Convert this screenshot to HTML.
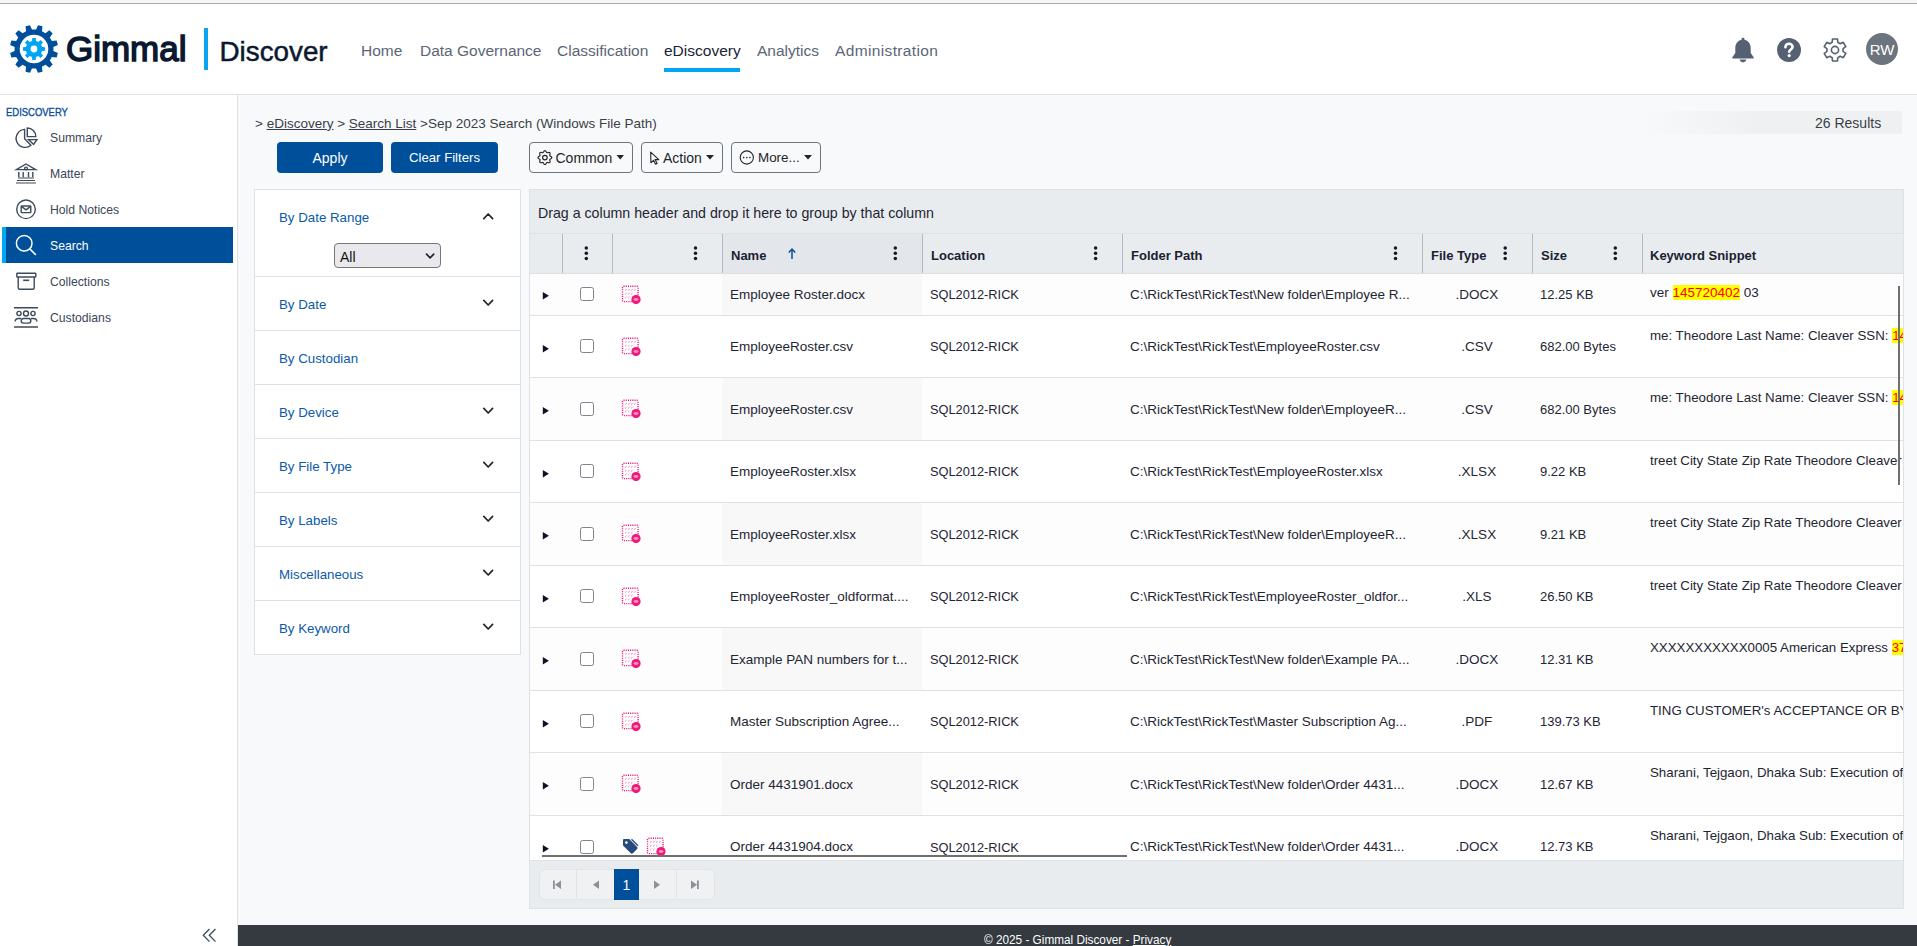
<!DOCTYPE html>
<html><head><meta charset="utf-8">
<style>
*{box-sizing:border-box;margin:0;padding:0}
html,body{width:1917px;height:946px;overflow:hidden;background:#f8f9fa;font-family:"Liberation Sans",sans-serif;color:#212529}
.a{position:absolute}
.t{position:absolute;white-space:nowrap;line-height:1}
#topstrip{left:0;top:0;width:1917px;height:3px;background:linear-gradient(#f5f5f7 0,#f5f5f7 2px,#f8f8fa 2px)}
#topline{left:0;top:3px;width:1917px;height:1px;background:#a8a8a8}
#header{left:0;top:4px;width:1917px;height:90px;background:#fff}
#hborder{left:0;top:94px;width:1917px;height:1px;background:#dee2e6}
#sidebar{left:0;top:95px;width:237px;height:851px;background:#fff}
#sborder{left:237px;top:95px;width:1px;height:851px;background:#dee2e6}
.nav{font-size:15.5px;color:#5b6676}
.side{font-size:12.2px;color:#3b4656}
.fil{font-size:13.3px;color:#0b5aa8}
.filrow{position:absolute;left:254px;width:267px;height:55px;border:1px solid #dee2e6;background:#fff}
.btnp{position:absolute;top:142px;height:31px;background:#004f9b;border-radius:4px;color:#fff;font-size:14px}
.btno{position:absolute;top:142px;height:31px;border:1px solid #6c757d;border-radius:4px;font-size:14px;color:#212529}
.cell{font-size:13.5px;color:#1e2533}
.hd{font-size:13px;font-weight:bold;color:#1a2232}
.hl{background:#ffff00;color:#ff0000}
</style></head><body>
<div id="topstrip" class="a"></div>
<div id="topline" class="a"></div>
<div id="header" class="a"></div>
<div id="hborder" class="a"></div>
<div id="sidebar" class="a"></div>
<div id="sborder" class="a"></div>

<!-- logo -->
<svg class="a" style="left:9px;top:24px" width="50" height="50" viewBox="0 0 50 50" id="logo"><path fill="#004f9d" fill-rule="evenodd" d="M44.39 27.04 L48.87 28.99 L47.67 33.48 L42.81 32.93 L40.78 36.46 L43.67 40.39 L40.39 43.67 L36.46 40.78 L32.93 42.81 L33.48 47.67 L28.99 48.87 L27.04 44.39 L22.96 44.39 L21.01 48.87 L16.52 47.67 L17.07 42.81 L13.54 40.78 L9.61 43.67 L6.33 40.39 L9.22 36.46 L7.19 32.93 L2.33 33.48 L1.13 28.99 L5.61 27.04 L5.61 22.96 L1.13 21.01 L2.33 16.52 L7.19 17.07 L9.22 13.54 L6.33 9.61 L9.61 6.33 L13.54 9.22 L17.07 7.19 L16.52 2.33 L21.01 1.13 L22.96 5.61 L27.04 5.61 L28.99 1.13 L33.48 2.33 L32.93 7.19 L36.46 9.22 L40.39 6.33 L43.67 9.61 L40.78 13.54 L42.81 17.07 L47.67 16.52 L48.87 21.01 L44.39 22.96Z M10.70 25.00a14.30 14.30 0 1 0 28.60 0a14.30 14.30 0 1 0 -28.60 0Z"/><path fill="#00a6f5" fill-rule="evenodd" d="M33.05 22.99 L36.06 23.25 L36.06 26.75 L33.05 27.01 L32.11 29.27 L34.06 31.58 L31.58 34.06 L29.27 32.11 L27.01 33.05 L26.75 36.06 L23.25 36.06 L22.99 33.05 L20.73 32.11 L18.42 34.06 L15.94 31.58 L17.89 29.27 L16.95 27.01 L13.94 26.75 L13.94 23.25 L16.95 22.99 L17.89 20.73 L15.94 18.42 L18.42 15.94 L20.73 17.89 L22.99 16.95 L23.25 13.94 L26.75 13.94 L27.01 16.95 L29.27 17.89 L31.58 15.94 L34.06 18.42 L32.11 20.73Z M21.60 25.00a3.40 3.40 0 1 0 6.80 0a3.40 3.40 0 1 0 -6.80 0Z"/></svg>
<div class="t" style="left:65.5px;top:31.5px;font-size:35.5px;color:#0a1930;-webkit-text-stroke:1.5px #0a1930;letter-spacing:0px;transform:scaleX(0.985);transform-origin:left top">Gimmal</div>
<div class="a" style="left:204px;top:28px;width:4px;height:42px;background:#0aa5f0"></div>
<div class="t" style="left:219.5px;top:37.6px;font-size:27.8px;color:#0a1930;-webkit-text-stroke:0.5px #0a1930">Discover</div>

<!-- nav -->
<div class="t nav" style="left:361px;top:42.8px">Home</div>
<div class="t nav" style="left:420px;top:42.8px">Data Governance</div>
<div class="t nav" style="left:557px;top:42.8px">Classification</div>
<div class="t nav" style="left:664px;top:42.8px;color:#1a2538">eDiscovery</div>
<div class="a" style="left:664px;top:68px;width:76px;height:4px;background:#00a5f1"></div>
<div class="t nav" style="left:757px;top:42.8px">Analytics</div>
<div class="t nav" style="left:835px;top:42.8px;letter-spacing:0.36px">Administration</div>


<!-- header right icons -->
<svg class="a" style="left:1731px;top:37px" width="24" height="26" viewBox="0 0 24 26">
 <path fill="#556173" d="M12 0.8c-0.9 0-1.5 0.6-1.5 1.4v0.5C6.6 3.5 4.3 6.9 4.3 10.8v5.2L1.4 20.3c-0.4 0.6 0 1.3 0.7 1.3h19.8c0.7 0 1.1-0.7 0.7-1.3L19.7 16v-5.2c0-3.9-2.3-7.3-6.2-8.1V2.2c0-0.8-0.6-1.4-1.5-1.4z"/>
 <path fill="#556173" d="M8.6 22.6h6.8c-0.3 1.6-1.7 2.8-3.4 2.8s-3.1-1.2-3.4-2.8z"/>
</svg>
<svg class="a" style="left:1777px;top:38px" width="24" height="24" viewBox="0 0 24 24">
 <circle cx="12" cy="12" r="12" fill="#556173"/>
 <path fill="none" stroke="#fff" stroke-width="2.6" stroke-linecap="round" d="M8.4 9.2c0-2.1 1.6-3.4 3.6-3.4s3.6 1.3 3.6 3.2c0 2.4-3.4 2.5-3.4 4.8"/>
 <circle cx="12.2" cy="17.6" r="1.6" fill="#fff"/>
</svg>
<svg class="a" style="left:1822px;top:37px" width="26" height="26" viewBox="0 0 26 26" id="hgear"><path fill="none" stroke="#556173" stroke-width="1.6" stroke-linejoin="round" d="M10.20 5.29 L10.46 1.99 L15.54 1.99 L15.80 5.29 L18.27 6.72 L21.26 5.29 L23.81 9.70 L21.08 11.58 L21.08 14.42 L23.81 16.30 L21.26 20.71 L18.27 19.28 L15.80 20.71 L15.54 24.01 L10.46 24.01 L10.20 20.71 L7.73 19.28 L4.74 20.71 L2.19 16.30 L4.92 14.42 L4.92 11.58 L2.19 9.70 L4.74 5.29 L7.73 6.72Z"/><circle cx="13" cy="13" r="3.6" fill="none" stroke="#556173" stroke-width="1.6"/></svg>
<div class="a" style="left:1866px;top:33px;width:32px;height:32px;border-radius:50%;background:#6c757d"></div>
<div class="t" style="left:1866px;top:42px;width:32px;text-align:center;font-size:15px;color:#fff">RW</div>

<!-- sidebar -->
<div class="t" style="left:6px;top:107px;font-size:11px;color:#0a4f9c;-webkit-text-stroke:0.35px #0a4f9c;transform:scaleX(0.86);transform-origin:left top">EDISCOVERY</div>
<div class="a" style="left:2px;top:227px;width:231px;height:36px;background:#004f9b"></div>
<div class="a" style="left:2px;top:227px;width:4px;height:36px;background:#00a9f4"></div>
<div class="t side" style="left:50px;top:132px">Summary</div>
<div class="t side" style="left:50px;top:168px">Matter</div>
<div class="t side" style="left:50px;top:204px">Hold Notices</div>
<div class="t side" style="left:50px;top:240px;color:#fff">Search</div>
<div class="t side" style="left:50px;top:276px">Collections</div>
<div class="t side" style="left:50px;top:312px">Custodians</div>
<svg class="a" style="left:0;top:95px" width="237" height="851" viewBox="0 95 237 851" fill="none" stroke="#3e4a5b" stroke-width="1.4">
 <!-- summary pie -->
 <path d="M24.6 129.4v9.3l6.3 6.6a9 9 0 1 1-6.3-15.9z"/>
 <path d="M27.3 128v8.6h8.5a8.5 8.5 0 0 0-8.5-8.6z"/>
 <path d="M28.6 139.6h8.3l-3.3 4.8z"/>
 <!-- matter -->
 <path d="M16.4 169.6l9.6-5.6 9.6 5.6z"/>
 <circle cx="26" cy="168.5" r="1.4"/>
 <path d="M18.8 172v5.3M23.2 172v5.3M28.5 172v5.3M32.8 172v5.3"/>
 <path d="M18 178h16M17 180.5h18M16 183h20" stroke-width="1.2"/>
 <!-- hold notices -->
 <circle cx="26" cy="209.3" r="9.3"/>
 <rect x="21.2" y="206" width="9.6" height="6.6" rx="0.6"/>
 <path d="M21.4 206.4l4.6 3.4 4.6-3.4"/>
 <!-- search -->
 <circle cx="24.2" cy="243.3" r="7.8" stroke="#fff" stroke-width="1.5"/>
 <path d="M29.8 248.9l6 6" stroke="#fff" stroke-width="1.5"/>
 <!-- collections -->
 <rect x="16.8" y="273.2" width="19" height="3.8" rx="0.6"/>
 <path d="M18.2 277v10.8c0 0.9 0.6 1.5 1.5 1.5h13c0.9 0 1.5-0.6 1.5-1.5V277"/>
 <path d="M23.2 280.3h6" stroke-width="1.6"/>
 <!-- custodians -->
 <path d="M14 307.8h24M14 327h24" stroke-width="1.6"/>
 <circle cx="19" cy="313.5" r="2.1"/><circle cx="26" cy="313.5" r="2.5"/><circle cx="33" cy="313.5" r="2.1"/>
 <path d="M15.2 321.5c0-2 1.2-3 3.6-3h2.2M36.8 321.5c0-2-1.2-3-3.6-3h-2.2"/>
 <rect x="21.2" y="318.5" width="9.6" height="4.6" rx="2.3"/>
 <!-- collapse -->
 <path d="M209.5 929l-6.2 6.3 6.2 6.3M215.5 929l-6.2 6.3 6.2 6.3" stroke-width="1.3"/>
</svg>

<!-- breadcrumb -->
<div class="t" style="left:255px;top:116.5px;font-size:13.5px;color:#3a3f47">&gt; <u>eDiscovery</u> &gt; <u>Search List</u> &gt;Sep 2023 Search (Windows File Path)</div>
<div class="a" style="left:1641px;top:111px;width:261px;height:23px;background:linear-gradient(to right,rgba(239,240,242,0),#eff0f2 45%)"></div>
<div class="t" style="left:1815px;top:116px;font-size:14px;color:#3a3f47">26 Results</div>

<!-- buttons -->
<div class="btnp" style="left:277px;width:106px"></div>
<div class="t" style="left:277px;width:106px;text-align:center;top:151.3px;font-size:14px;color:#fff">Apply</div>
<div class="btnp" style="left:391px;width:107px"></div>
<div class="t" style="left:391px;width:107px;text-align:center;top:151.3px;font-size:13.2px;color:#fff">Clear Filters</div>

<div class="btno" style="left:529px;width:104px"></div>
<div class="btno" style="left:641px;width:82px"></div>
<div class="btno" style="left:731px;width:90px"></div>
<div class="t" style="left:555.5px;top:150.5px;font-size:14px">Common</div>
<div class="t" style="left:663px;top:150.5px;font-size:14px">Action</div>
<div class="t" style="left:758px;top:150.5px;font-size:13.4px">More...</div>
<svg class="a" style="left:0;top:0" width="900" height="200" viewBox="0 0 900 200">
 <path d="M616.5 155h7.5l-3.75 4.5z M706 155h8l-4 4.5z M804 155h8l-4 4.5z" fill="#212529"/>
 <path fill="none" stroke="#212529" stroke-width="1.15" stroke-linejoin="round" d="M551.80 157.60 L551.76 157.87 L551.65 158.13 L551.48 158.38 L551.23 158.60 L550.88 158.79 L550.53 158.95 L550.27 159.11 L550.06 159.28 L549.90 159.45 L549.80 159.63 L549.74 159.83 L549.73 160.06 L549.77 160.33 L549.83 160.62 L549.97 160.99 L550.09 161.37 L550.10 161.70 L550.05 162.00 L549.94 162.26 L549.78 162.48 L549.56 162.64 L549.30 162.75 L549.00 162.80 L548.67 162.79 L548.29 162.67 L547.92 162.53 L547.63 162.47 L547.36 162.43 L547.13 162.44 L546.93 162.50 L546.75 162.60 L546.58 162.76 L546.41 162.97 L546.25 163.23 L546.09 163.58 L545.90 163.93 L545.68 164.18 L545.43 164.35 L545.17 164.46 L544.90 164.50 L544.63 164.46 L544.37 164.35 L544.12 164.18 L543.90 163.93 L543.71 163.58 L543.55 163.23 L543.39 162.97 L543.22 162.76 L543.05 162.60 L542.87 162.50 L542.67 162.44 L542.44 162.43 L542.17 162.47 L541.88 162.53 L541.51 162.67 L541.13 162.79 L540.80 162.80 L540.50 162.75 L540.24 162.64 L540.02 162.48 L539.86 162.26 L539.75 162.00 L539.70 161.70 L539.71 161.37 L539.83 160.99 L539.97 160.62 L540.03 160.33 L540.07 160.06 L540.06 159.83 L540.00 159.63 L539.90 159.45 L539.74 159.28 L539.53 159.11 L539.27 158.95 L538.92 158.79 L538.57 158.60 L538.32 158.38 L538.15 158.13 L538.04 157.87 L538.00 157.60 L538.04 157.33 L538.15 157.07 L538.32 156.82 L538.57 156.60 L538.92 156.41 L539.27 156.25 L539.53 156.09 L539.74 155.92 L539.90 155.75 L540.00 155.57 L540.06 155.37 L540.07 155.14 L540.03 154.87 L539.97 154.58 L539.83 154.21 L539.71 153.83 L539.70 153.50 L539.75 153.20 L539.86 152.94 L540.02 152.72 L540.24 152.56 L540.50 152.45 L540.80 152.40 L541.13 152.41 L541.51 152.53 L541.88 152.67 L542.17 152.73 L542.44 152.77 L542.67 152.76 L542.87 152.70 L543.05 152.60 L543.22 152.44 L543.39 152.23 L543.55 151.97 L543.71 151.62 L543.90 151.27 L544.12 151.02 L544.37 150.85 L544.63 150.74 L544.90 150.70 L545.17 150.74 L545.43 150.85 L545.68 151.02 L545.90 151.27 L546.09 151.62 L546.25 151.97 L546.41 152.23 L546.58 152.44 L546.75 152.60 L546.93 152.70 L547.13 152.76 L547.36 152.77 L547.63 152.73 L547.92 152.67 L548.29 152.53 L548.67 152.41 L549.00 152.40 L549.30 152.45 L549.56 152.56 L549.78 152.72 L549.94 152.94 L550.05 153.20 L550.10 153.50 L550.09 153.83 L549.97 154.21 L549.83 154.58 L549.77 154.87 L549.73 155.14 L549.74 155.37 L549.80 155.57 L549.90 155.75 L550.06 155.92 L550.27 156.09 L550.53 156.25 L550.88 156.41 L551.23 156.60 L551.48 156.82 L551.65 157.07 L551.76 157.33Z"/><circle cx="544.9" cy="157.6" r="2.3" fill="none" stroke="#212529" stroke-width="1.15"/>
 <path d="M650.7 152.2l0.2 10.6 2.6-2.5 2.1 4 1.5-0.8-2-3.9h3.7z" fill="none" stroke="#212529" stroke-width="1.1" stroke-linejoin="round"/>
 <circle cx="746.8" cy="157.5" r="6.6" fill="none" stroke="#212529" stroke-width="1.1"/>
 <circle cx="743.7" cy="157.6" r="0.8" fill="#212529"/><circle cx="746.8" cy="157.6" r="0.8" fill="#212529"/><circle cx="749.9" cy="157.6" r="0.8" fill="#212529"/>
</svg>
<!-- filter panel -->
<div class="a" style="left:254px;top:189px;width:267px;height:466px;background:#fff;border:1px solid #dee2e6"></div>
<div class="a" style="left:255px;top:276px;width:265px;height:1px;background:#dee2e6"></div>
<div class="a" style="left:255px;top:330px;width:265px;height:1px;background:#dee2e6"></div>
<div class="a" style="left:255px;top:384px;width:265px;height:1px;background:#dee2e6"></div>
<div class="a" style="left:255px;top:438px;width:265px;height:1px;background:#dee2e6"></div>
<div class="a" style="left:255px;top:492px;width:265px;height:1px;background:#dee2e6"></div>
<div class="a" style="left:255px;top:546px;width:265px;height:1px;background:#dee2e6"></div>
<div class="a" style="left:255px;top:600px;width:265px;height:1px;background:#dee2e6"></div>
<div class="t fil" style="left:279px;top:211px">By Date Range</div>
<div class="t fil" style="left:279px;top:298px">By Date</div>
<div class="t fil" style="left:279px;top:352px">By Custodian</div>
<div class="t fil" style="left:279px;top:406px">By Device</div>
<div class="t fil" style="left:279px;top:460px">By File Type</div>
<div class="t fil" style="left:279px;top:514px">By Labels</div>
<div class="t fil" style="left:279px;top:568px">Miscellaneous</div>
<div class="t fil" style="left:279px;top:622px">By Keyword</div>
<div class="a" style="left:334px;top:243px;width:107px;height:25px;background:#e9e9ed;border:1px solid #767676;border-radius:4px"></div>
<div class="t" style="left:340px;top:249.5px;font-size:14px;color:#111">All</div>
<svg class="a" style="left:0;top:0" width="530" height="660" viewBox="0 0 530 660" fill="none" stroke="#212529" stroke-width="1.7" stroke-linecap="round" stroke-linejoin="round">
 <path d="M426.5 254.2l3.6 3.6 3.6-3.6"/>
 <path d="M483.8 218.6l4.4-4.6 4.4 4.6"/>
 <path d="M483.8 300.4l4.4 4.6 4.4-4.6"/>
 <path d="M483.8 408.4l4.4 4.6 4.4-4.6"/>
 <path d="M483.8 462.4l4.4 4.6 4.4-4.6"/>
 <path d="M483.8 516.4l4.4 4.6 4.4-4.6"/>
 <path d="M483.8 570.4l4.4 4.6 4.4-4.6"/>
 <path d="M483.8 624.4l4.4 4.6 4.4-4.6"/>
</svg>

<!-- grid frame -->
<div class="a" style="left:529px;top:189px;width:1375px;height:720px;background:#e9ecef;border:1px solid #dee2e6"></div>
<div class="t" style="left:538px;top:206px;font-size:14.2px;color:#1e2533">Drag a column header and drop it here to group by that column</div>
<div class="a" style="left:530px;top:233px;width:1373px;height:1px;background:#dde1e5"></div>
<div class="a" style="left:722px;top:234px;width:200px;height:39px;background:#e3e6ea"></div>
<div class="a" style="left:530px;top:273px;width:1373px;height:1px;background:#dee2e6"></div>
<div class="a" style="left:562px;top:234px;width:1px;height:39px;background:#b3b9c0"></div>
<div class="a" style="left:612px;top:234px;width:1px;height:39px;background:#b3b9c0"></div>
<div class="a" style="left:722px;top:234px;width:1px;height:39px;background:#b3b9c0"></div>
<div class="a" style="left:922px;top:234px;width:1px;height:39px;background:#b3b9c0"></div>
<div class="a" style="left:1122px;top:234px;width:1px;height:39px;background:#b3b9c0"></div>
<div class="a" style="left:1422px;top:234px;width:1px;height:39px;background:#b3b9c0"></div>
<div class="a" style="left:1532px;top:234px;width:1px;height:39px;background:#b3b9c0"></div>
<div class="a" style="left:1642px;top:234px;width:1px;height:39px;background:#b3b9c0"></div>
<div class="t hd" style="left:731px;top:248.5px">Name</div>
<div class="t hd" style="left:931px;top:248.5px">Location</div>
<div class="t hd" style="left:1131px;top:248.5px">Folder Path</div>
<div class="t hd" style="left:1431px;top:248.5px">File Type</div>
<div class="t hd" style="left:1541px;top:248.5px">Size</div>
<div class="t hd" style="left:1650px;top:248.5px">Keyword Snippet</div>
<svg class="a" style="left:0;top:0" width="1917" height="300" viewBox="0 0 1917 300" fill="#111827">
 <circle cx="586.3" cy="248.0" r="1.75"/><circle cx="586.3" cy="253.3" r="1.75"/><circle cx="586.3" cy="258.6" r="1.75"/><circle cx="695.5" cy="248.0" r="1.75"/><circle cx="695.5" cy="253.3" r="1.75"/><circle cx="695.5" cy="258.6" r="1.75"/><circle cx="895.3" cy="248.0" r="1.75"/><circle cx="895.3" cy="253.3" r="1.75"/><circle cx="895.3" cy="258.6" r="1.75"/><circle cx="1095.6" cy="248.0" r="1.75"/><circle cx="1095.6" cy="253.3" r="1.75"/><circle cx="1095.6" cy="258.6" r="1.75"/><circle cx="1395.5" cy="248.0" r="1.75"/><circle cx="1395.5" cy="253.3" r="1.75"/><circle cx="1395.5" cy="258.6" r="1.75"/><circle cx="1505.2" cy="248.0" r="1.75"/><circle cx="1505.2" cy="253.3" r="1.75"/><circle cx="1505.2" cy="258.6" r="1.75"/><circle cx="1615.3" cy="248.0" r="1.75"/><circle cx="1615.3" cy="253.3" r="1.75"/><circle cx="1615.3" cy="258.6" r="1.75"/>
 <path d="M792 259V249.5M788.8 252.5l3.2-3.5 3.2 3.5" stroke="#0b4f9f" stroke-width="1.5" fill="none"/>
</svg>
<div class="a" style="left:529px;top:273px;width:1374px;height:587px;background:#fff;overflow:hidden">
<div class="a" style="left:0;top:0px;width:1374px;height:42px;background:#fdfdfd"></div>
<div class="a" style="left:193px;top:0px;width:200px;height:42px;background:#f8f8f9"></div>
<div class="a" style="left:0;top:41.5px;width:1374px;height:1px;background:#dee2e6"></div>
<svg class="a" style="left:13.3px;top:18.4px" width="7" height="9" viewBox="0 0 7 9"><path d="M0.8 0.9L6.9 4.7L0.8 8.5z" fill="#0b1426"/></svg>
<div class="a" style="left:51px;top:14.0px;width:14px;height:14px;border:1px solid #80858d;border-radius:2.5px;background:#fff"></div>
<svg class="a" style="left:92px;top:10.5px" width="20" height="20" viewBox="0 0 20 20"><rect x="1.5" y="2.3" width="15.6" height="15.3" rx="1" fill="none" stroke="#f0187a" stroke-width="1.4" stroke-dasharray="1.1 1.1"/><path d="M4.2 6.6l1.6-1.6M7.2 6.6l1.6-1.6M10.2 6.6l1.6-1.6M13.2 6.6l1.6-1.6M4.2 10.4l1.6-1.6M7.2 10.4l1.6-1.6M10.2 10.4l1.6-1.6M4.2 14.2l1.6-1.6M7.2 14.2l1.6-1.6" stroke="#f0187a" stroke-width="0.9" stroke-dasharray="0.8 0.6" opacity="0.85"/><circle cx="15" cy="15.5" r="4.6" fill="#f0187a"/><ellipse cx="15" cy="15.5" rx="2.6" ry="1.4" fill="#f790bd"/></svg>
<div class="t cell" style="left:201px;top:14.9px">Employee Roster.docx</div>
<div class="t cell" style="left:401px;top:16.1px;font-size:12.8px">SQL2012-RICK</div>
<div class="t cell" style="left:601px;top:14.9px">C:\RickTest\RickTest\New folder\Employee R...</div>
<div class="t cell" style="left:893px;top:14.9px;width:110px;text-align:center">.DOCX</div>
<div class="t cell" style="left:1011px;top:14.9px;font-size:13px">12.25 KB</div>
<div class="t cell" style="left:1121px;top:12.5px;font-size:13.5px">ver <span class="hl">145720402</span> 03</div>
<div class="a" style="left:0;top:104.0px;width:1374px;height:1px;background:#dee2e6"></div>
<svg class="a" style="left:13.3px;top:70.65px" width="7" height="9" viewBox="0 0 7 9"><path d="M0.8 0.9L6.9 4.7L0.8 8.5z" fill="#0b1426"/></svg>
<div class="a" style="left:51px;top:66.25px;width:14px;height:14px;border:1px solid #80858d;border-radius:2.5px;background:#fff"></div>
<svg class="a" style="left:92px;top:62.75px" width="20" height="20" viewBox="0 0 20 20"><rect x="1.5" y="2.3" width="15.6" height="15.3" rx="1" fill="none" stroke="#f0187a" stroke-width="1.4" stroke-dasharray="1.1 1.1"/><path d="M4.2 6.6l1.6-1.6M7.2 6.6l1.6-1.6M10.2 6.6l1.6-1.6M13.2 6.6l1.6-1.6M4.2 10.4l1.6-1.6M7.2 10.4l1.6-1.6M10.2 10.4l1.6-1.6M4.2 14.2l1.6-1.6M7.2 14.2l1.6-1.6" stroke="#f0187a" stroke-width="0.9" stroke-dasharray="0.8 0.6" opacity="0.85"/><circle cx="15" cy="15.5" r="4.6" fill="#f0187a"/><ellipse cx="15" cy="15.5" rx="2.6" ry="1.4" fill="#f790bd"/></svg>
<div class="t cell" style="left:201px;top:67.15px">EmployeeRoster.csv</div>
<div class="t cell" style="left:401px;top:68.35px;font-size:12.8px">SQL2012-RICK</div>
<div class="t cell" style="left:601px;top:67.15px">C:\RickTest\RickTest\EmployeeRoster.csv</div>
<div class="t cell" style="left:893px;top:67.15px;width:110px;text-align:center">.CSV</div>
<div class="t cell" style="left:1011px;top:67.15px;font-size:13px">682.00 Bytes</div>
<div class="t cell" style="left:1121px;top:55.5px;font-size:13.3px">me: Theodore Last Name: Cleaver SSN: <span class="hl">14</span></div>
<div class="a" style="left:0;top:104.5px;width:1374px;height:62.5px;background:#fdfdfd"></div>
<div class="a" style="left:193px;top:104.5px;width:200px;height:62.5px;background:#f8f8f9"></div>
<div class="a" style="left:0;top:166.5px;width:1374px;height:1px;background:#dee2e6"></div>
<svg class="a" style="left:13.3px;top:133.15px" width="7" height="9" viewBox="0 0 7 9"><path d="M0.8 0.9L6.9 4.7L0.8 8.5z" fill="#0b1426"/></svg>
<div class="a" style="left:51px;top:128.75px;width:14px;height:14px;border:1px solid #80858d;border-radius:2.5px;background:#fff"></div>
<svg class="a" style="left:92px;top:125.25px" width="20" height="20" viewBox="0 0 20 20"><rect x="1.5" y="2.3" width="15.6" height="15.3" rx="1" fill="none" stroke="#f0187a" stroke-width="1.4" stroke-dasharray="1.1 1.1"/><path d="M4.2 6.6l1.6-1.6M7.2 6.6l1.6-1.6M10.2 6.6l1.6-1.6M13.2 6.6l1.6-1.6M4.2 10.4l1.6-1.6M7.2 10.4l1.6-1.6M10.2 10.4l1.6-1.6M4.2 14.2l1.6-1.6M7.2 14.2l1.6-1.6" stroke="#f0187a" stroke-width="0.9" stroke-dasharray="0.8 0.6" opacity="0.85"/><circle cx="15" cy="15.5" r="4.6" fill="#f0187a"/><ellipse cx="15" cy="15.5" rx="2.6" ry="1.4" fill="#f790bd"/></svg>
<div class="t cell" style="left:201px;top:129.65px">EmployeeRoster.csv</div>
<div class="t cell" style="left:401px;top:130.85px;font-size:12.8px">SQL2012-RICK</div>
<div class="t cell" style="left:601px;top:129.65px">C:\RickTest\RickTest\New folder\EmployeeR...</div>
<div class="t cell" style="left:893px;top:129.65px;width:110px;text-align:center">.CSV</div>
<div class="t cell" style="left:1011px;top:129.65px;font-size:13px">682.00 Bytes</div>
<div class="t cell" style="left:1121px;top:118.0px;font-size:13.3px">me: Theodore Last Name: Cleaver SSN: <span class="hl">14</span></div>
<div class="a" style="left:0;top:229.0px;width:1374px;height:1px;background:#dee2e6"></div>
<svg class="a" style="left:13.3px;top:195.65px" width="7" height="9" viewBox="0 0 7 9"><path d="M0.8 0.9L6.9 4.7L0.8 8.5z" fill="#0b1426"/></svg>
<div class="a" style="left:51px;top:191.25px;width:14px;height:14px;border:1px solid #80858d;border-radius:2.5px;background:#fff"></div>
<svg class="a" style="left:92px;top:187.75px" width="20" height="20" viewBox="0 0 20 20"><rect x="1.5" y="2.3" width="15.6" height="15.3" rx="1" fill="none" stroke="#f0187a" stroke-width="1.4" stroke-dasharray="1.1 1.1"/><path d="M4.2 6.6l1.6-1.6M7.2 6.6l1.6-1.6M10.2 6.6l1.6-1.6M13.2 6.6l1.6-1.6M4.2 10.4l1.6-1.6M7.2 10.4l1.6-1.6M10.2 10.4l1.6-1.6M4.2 14.2l1.6-1.6M7.2 14.2l1.6-1.6" stroke="#f0187a" stroke-width="0.9" stroke-dasharray="0.8 0.6" opacity="0.85"/><circle cx="15" cy="15.5" r="4.6" fill="#f0187a"/><ellipse cx="15" cy="15.5" rx="2.6" ry="1.4" fill="#f790bd"/></svg>
<div class="t cell" style="left:201px;top:192.15px">EmployeeRoster.xlsx</div>
<div class="t cell" style="left:401px;top:193.35px;font-size:12.8px">SQL2012-RICK</div>
<div class="t cell" style="left:601px;top:192.15px">C:\RickTest\RickTest\EmployeeRoster.xlsx</div>
<div class="t cell" style="left:893px;top:192.15px;width:110px;text-align:center">.XLSX</div>
<div class="t cell" style="left:1011px;top:192.15px;font-size:13px">9.22 KB</div>
<div class="t cell" style="left:1121px;top:180.5px;font-size:13.3px">treet City State Zip Rate Theodore Cleaver</div>
<div class="a" style="left:0;top:229.5px;width:1374px;height:62.5px;background:#fdfdfd"></div>
<div class="a" style="left:193px;top:229.5px;width:200px;height:62.5px;background:#f8f8f9"></div>
<div class="a" style="left:0;top:291.5px;width:1374px;height:1px;background:#dee2e6"></div>
<svg class="a" style="left:13.3px;top:258.15px" width="7" height="9" viewBox="0 0 7 9"><path d="M0.8 0.9L6.9 4.7L0.8 8.5z" fill="#0b1426"/></svg>
<div class="a" style="left:51px;top:253.75px;width:14px;height:14px;border:1px solid #80858d;border-radius:2.5px;background:#fff"></div>
<svg class="a" style="left:92px;top:250.25px" width="20" height="20" viewBox="0 0 20 20"><rect x="1.5" y="2.3" width="15.6" height="15.3" rx="1" fill="none" stroke="#f0187a" stroke-width="1.4" stroke-dasharray="1.1 1.1"/><path d="M4.2 6.6l1.6-1.6M7.2 6.6l1.6-1.6M10.2 6.6l1.6-1.6M13.2 6.6l1.6-1.6M4.2 10.4l1.6-1.6M7.2 10.4l1.6-1.6M10.2 10.4l1.6-1.6M4.2 14.2l1.6-1.6M7.2 14.2l1.6-1.6" stroke="#f0187a" stroke-width="0.9" stroke-dasharray="0.8 0.6" opacity="0.85"/><circle cx="15" cy="15.5" r="4.6" fill="#f0187a"/><ellipse cx="15" cy="15.5" rx="2.6" ry="1.4" fill="#f790bd"/></svg>
<div class="t cell" style="left:201px;top:254.65px">EmployeeRoster.xlsx</div>
<div class="t cell" style="left:401px;top:255.85px;font-size:12.8px">SQL2012-RICK</div>
<div class="t cell" style="left:601px;top:254.65px">C:\RickTest\RickTest\New folder\EmployeeR...</div>
<div class="t cell" style="left:893px;top:254.65px;width:110px;text-align:center">.XLSX</div>
<div class="t cell" style="left:1011px;top:254.65px;font-size:13px">9.21 KB</div>
<div class="t cell" style="left:1121px;top:243.0px;font-size:13.3px">treet City State Zip Rate Theodore Cleaver</div>
<div class="a" style="left:0;top:354.0px;width:1374px;height:1px;background:#dee2e6"></div>
<svg class="a" style="left:13.3px;top:320.65px" width="7" height="9" viewBox="0 0 7 9"><path d="M0.8 0.9L6.9 4.7L0.8 8.5z" fill="#0b1426"/></svg>
<div class="a" style="left:51px;top:316.25px;width:14px;height:14px;border:1px solid #80858d;border-radius:2.5px;background:#fff"></div>
<svg class="a" style="left:92px;top:312.75px" width="20" height="20" viewBox="0 0 20 20"><rect x="1.5" y="2.3" width="15.6" height="15.3" rx="1" fill="none" stroke="#f0187a" stroke-width="1.4" stroke-dasharray="1.1 1.1"/><path d="M4.2 6.6l1.6-1.6M7.2 6.6l1.6-1.6M10.2 6.6l1.6-1.6M13.2 6.6l1.6-1.6M4.2 10.4l1.6-1.6M7.2 10.4l1.6-1.6M10.2 10.4l1.6-1.6M4.2 14.2l1.6-1.6M7.2 14.2l1.6-1.6" stroke="#f0187a" stroke-width="0.9" stroke-dasharray="0.8 0.6" opacity="0.85"/><circle cx="15" cy="15.5" r="4.6" fill="#f0187a"/><ellipse cx="15" cy="15.5" rx="2.6" ry="1.4" fill="#f790bd"/></svg>
<div class="t cell" style="left:201px;top:317.15px">EmployeeRoster_oldformat....</div>
<div class="t cell" style="left:401px;top:318.35px;font-size:12.8px">SQL2012-RICK</div>
<div class="t cell" style="left:601px;top:317.15px">C:\RickTest\RickTest\EmployeeRoster_oldfor...</div>
<div class="t cell" style="left:893px;top:317.15px;width:110px;text-align:center">.XLS</div>
<div class="t cell" style="left:1011px;top:317.15px;font-size:13px">26.50 KB</div>
<div class="t cell" style="left:1121px;top:305.5px;font-size:13.3px">treet City State Zip Rate Theodore Cleaver</div>
<div class="a" style="left:0;top:354.5px;width:1374px;height:62.5px;background:#fdfdfd"></div>
<div class="a" style="left:193px;top:354.5px;width:200px;height:62.5px;background:#f8f8f9"></div>
<div class="a" style="left:0;top:416.5px;width:1374px;height:1px;background:#dee2e6"></div>
<svg class="a" style="left:13.3px;top:383.15px" width="7" height="9" viewBox="0 0 7 9"><path d="M0.8 0.9L6.9 4.7L0.8 8.5z" fill="#0b1426"/></svg>
<div class="a" style="left:51px;top:378.75px;width:14px;height:14px;border:1px solid #80858d;border-radius:2.5px;background:#fff"></div>
<svg class="a" style="left:92px;top:375.25px" width="20" height="20" viewBox="0 0 20 20"><rect x="1.5" y="2.3" width="15.6" height="15.3" rx="1" fill="none" stroke="#f0187a" stroke-width="1.4" stroke-dasharray="1.1 1.1"/><path d="M4.2 6.6l1.6-1.6M7.2 6.6l1.6-1.6M10.2 6.6l1.6-1.6M13.2 6.6l1.6-1.6M4.2 10.4l1.6-1.6M7.2 10.4l1.6-1.6M10.2 10.4l1.6-1.6M4.2 14.2l1.6-1.6M7.2 14.2l1.6-1.6" stroke="#f0187a" stroke-width="0.9" stroke-dasharray="0.8 0.6" opacity="0.85"/><circle cx="15" cy="15.5" r="4.6" fill="#f0187a"/><ellipse cx="15" cy="15.5" rx="2.6" ry="1.4" fill="#f790bd"/></svg>
<div class="t cell" style="left:201px;top:379.65px">Example PAN numbers for t...</div>
<div class="t cell" style="left:401px;top:380.85px;font-size:12.8px">SQL2012-RICK</div>
<div class="t cell" style="left:601px;top:379.65px">C:\RickTest\RickTest\New folder\Example PA...</div>
<div class="t cell" style="left:893px;top:379.65px;width:110px;text-align:center">.DOCX</div>
<div class="t cell" style="left:1011px;top:379.65px;font-size:13px">12.31 KB</div>
<div class="t cell" style="left:1121px;top:368.0px;font-size:13.3px">XXXXXXXXXXX0005 American Express <span class="hl">37</span></div>
<div class="a" style="left:0;top:479.0px;width:1374px;height:1px;background:#dee2e6"></div>
<svg class="a" style="left:13.3px;top:445.65px" width="7" height="9" viewBox="0 0 7 9"><path d="M0.8 0.9L6.9 4.7L0.8 8.5z" fill="#0b1426"/></svg>
<div class="a" style="left:51px;top:441.25px;width:14px;height:14px;border:1px solid #80858d;border-radius:2.5px;background:#fff"></div>
<svg class="a" style="left:92px;top:437.75px" width="20" height="20" viewBox="0 0 20 20"><rect x="1.5" y="2.3" width="15.6" height="15.3" rx="1" fill="none" stroke="#f0187a" stroke-width="1.4" stroke-dasharray="1.1 1.1"/><path d="M4.2 6.6l1.6-1.6M7.2 6.6l1.6-1.6M10.2 6.6l1.6-1.6M13.2 6.6l1.6-1.6M4.2 10.4l1.6-1.6M7.2 10.4l1.6-1.6M10.2 10.4l1.6-1.6M4.2 14.2l1.6-1.6M7.2 14.2l1.6-1.6" stroke="#f0187a" stroke-width="0.9" stroke-dasharray="0.8 0.6" opacity="0.85"/><circle cx="15" cy="15.5" r="4.6" fill="#f0187a"/><ellipse cx="15" cy="15.5" rx="2.6" ry="1.4" fill="#f790bd"/></svg>
<div class="t cell" style="left:201px;top:442.15px">Master Subscription Agree...</div>
<div class="t cell" style="left:401px;top:443.35px;font-size:12.8px">SQL2012-RICK</div>
<div class="t cell" style="left:601px;top:442.15px">C:\RickTest\RickTest\Master Subscription Ag...</div>
<div class="t cell" style="left:893px;top:442.15px;width:110px;text-align:center">.PDF</div>
<div class="t cell" style="left:1011px;top:442.15px;font-size:13px">139.73 KB</div>
<div class="t cell" style="left:1121px;top:430.5px;font-size:13.3px">TING CUSTOMER's ACCEPTANCE OR BY E</div>
<div class="a" style="left:0;top:479.5px;width:1374px;height:62.5px;background:#fdfdfd"></div>
<div class="a" style="left:193px;top:479.5px;width:200px;height:62.5px;background:#f8f8f9"></div>
<div class="a" style="left:0;top:541.5px;width:1374px;height:1px;background:#dee2e6"></div>
<svg class="a" style="left:13.3px;top:508.15px" width="7" height="9" viewBox="0 0 7 9"><path d="M0.8 0.9L6.9 4.7L0.8 8.5z" fill="#0b1426"/></svg>
<div class="a" style="left:51px;top:503.75px;width:14px;height:14px;border:1px solid #80858d;border-radius:2.5px;background:#fff"></div>
<svg class="a" style="left:92px;top:500.25px" width="20" height="20" viewBox="0 0 20 20"><rect x="1.5" y="2.3" width="15.6" height="15.3" rx="1" fill="none" stroke="#f0187a" stroke-width="1.4" stroke-dasharray="1.1 1.1"/><path d="M4.2 6.6l1.6-1.6M7.2 6.6l1.6-1.6M10.2 6.6l1.6-1.6M13.2 6.6l1.6-1.6M4.2 10.4l1.6-1.6M7.2 10.4l1.6-1.6M10.2 10.4l1.6-1.6M4.2 14.2l1.6-1.6M7.2 14.2l1.6-1.6" stroke="#f0187a" stroke-width="0.9" stroke-dasharray="0.8 0.6" opacity="0.85"/><circle cx="15" cy="15.5" r="4.6" fill="#f0187a"/><ellipse cx="15" cy="15.5" rx="2.6" ry="1.4" fill="#f790bd"/></svg>
<div class="t cell" style="left:201px;top:504.65px">Order 4431901.docx</div>
<div class="t cell" style="left:401px;top:505.85px;font-size:12.8px">SQL2012-RICK</div>
<div class="t cell" style="left:601px;top:504.65px">C:\RickTest\RickTest\New folder\Order 4431...</div>
<div class="t cell" style="left:893px;top:504.65px;width:110px;text-align:center">.DOCX</div>
<div class="t cell" style="left:1011px;top:504.65px;font-size:13px">12.67 KB</div>
<div class="t cell" style="left:1121px;top:493.0px;font-size:13.3px">Sharani, Tejgaon, Dhaka Sub: Execution of</div>
<svg class="a" style="left:13.3px;top:570.9px" width="7" height="9" viewBox="0 0 7 9"><path d="M0.8 0.9L6.9 4.7L0.8 8.5z" fill="#0b1426"/></svg>
<div class="a" style="left:51px;top:566.5px;width:14px;height:14px;border:1px solid #80858d;border-radius:2.5px;background:#fff"></div>
<svg class="a" style="left:93px;top:564.5px" width="17" height="17" viewBox="0 0 17 17"><path d="M1 2.2v5.2l7.8 7.8c0.6 0.6 1.5 0.6 2.1 0l4.2-4.2c0.6-0.6 0.6-1.5 0-2.1L7.3 1.1H2.2C1.5 1.1 1 1.6 1 2.2z" fill="#254a7c"/><circle cx="4.4" cy="4.6" r="1.3" fill="#fff"/><path d="M9.5 1.2l6.5 6.5" stroke="#254a7c" stroke-width="1.3" fill="none"/></svg>
<svg class="a" style="left:117px;top:563.0px" width="20" height="20" viewBox="0 0 20 20"><rect x="1.5" y="2.3" width="15.6" height="15.3" rx="1" fill="none" stroke="#f0187a" stroke-width="1.4" stroke-dasharray="1.1 1.1"/><path d="M4.2 6.6l1.6-1.6M7.2 6.6l1.6-1.6M10.2 6.6l1.6-1.6M13.2 6.6l1.6-1.6M4.2 10.4l1.6-1.6M7.2 10.4l1.6-1.6M10.2 10.4l1.6-1.6M4.2 14.2l1.6-1.6M7.2 14.2l1.6-1.6" stroke="#f0187a" stroke-width="0.9" stroke-dasharray="0.8 0.6" opacity="0.85"/><circle cx="15" cy="15.5" r="4.6" fill="#f0187a"/><ellipse cx="15" cy="15.5" rx="2.6" ry="1.4" fill="#f790bd"/></svg>
<div class="t cell" style="left:201px;top:567.4px">Order 4431904.docx</div>
<div class="t cell" style="left:401px;top:568.6px;font-size:12.8px">SQL2012-RICK</div>
<div class="t cell" style="left:601px;top:567.4px">C:\RickTest\RickTest\New folder\Order 4431...</div>
<div class="t cell" style="left:893px;top:567.4px;width:110px;text-align:center">.DOCX</div>
<div class="t cell" style="left:1011px;top:567.4px;font-size:13px">12.73 KB</div>
<div class="t cell" style="left:1121px;top:555.5px;font-size:13.3px">Sharani, Tejgaon, Dhaka Sub: Execution of</div>
<div class="a" style="left:0;top:0;width:1374px;height:1px;background:#dcdfe3"></div>
</div>

<div class="a" style="left:529px;top:273px;width:1px;height:636px;background:#dee2e6"></div>
<div class="a" style="left:1903px;top:273px;width:1px;height:636px;background:#dee2e6"></div>
<!-- horizontal scrollbar -->
<div class="a" style="left:542px;top:855px;width:585px;height:2px;background:#6f6f6f"></div>
<!-- vertical scrollbar -->
<div class="a" style="left:1898px;top:286px;width:2px;height:199px;background:#6f6f6f"></div>
<!-- pager -->
<div class="a" style="left:530px;top:860px;width:1373px;height:1px;background:#e0e3e7"></div>
<div class="a" style="left:538.5px;top:869px;width:176.5px;height:30.5px;background:#eff1f3;border:1px solid #e1e4e8;border-radius:6px"></div>
<div class="a" style="left:576px;top:870px;width:1px;height:28px;background:#e0e3e6"></div>
<div class="a" style="left:676px;top:870px;width:1px;height:28px;background:#e0e3e6"></div>
<div class="a" style="left:614px;top:869px;width:25px;height:31px;background:#004f9b"></div>
<div class="t" style="left:614px;top:878px;width:25px;text-align:center;font-size:14px;color:#fff">1</div>
<svg class="a" style="left:0;top:860px" width="720" height="50" viewBox="0 860 720 50" fill="#8b9199">
 <path d="M553 880.5h1.8v8.5H553zM561 880.5v8.5l-6-4.25z"/>
 <path d="M599 880.5v8.5l-6-4.25z"/>
 <path d="M654 880.5v8.5l6-4.25z"/>
 <path d="M691 880.5v8.5l6-4.25zM697 880.5h1.8v8.5H697z"/>
</svg>
<!-- footer -->
<div class="a" style="left:238px;top:925px;width:1679px;height:21px;background:#343a40"></div>
<div class="t" style="left:984px;top:933.5px;font-size:12.6px;color:#fff;transform:scaleX(0.935);transform-origin:left top">&copy; 2025 - Gimmal Discover - <u>Privacy</u></div>
</body></html>
